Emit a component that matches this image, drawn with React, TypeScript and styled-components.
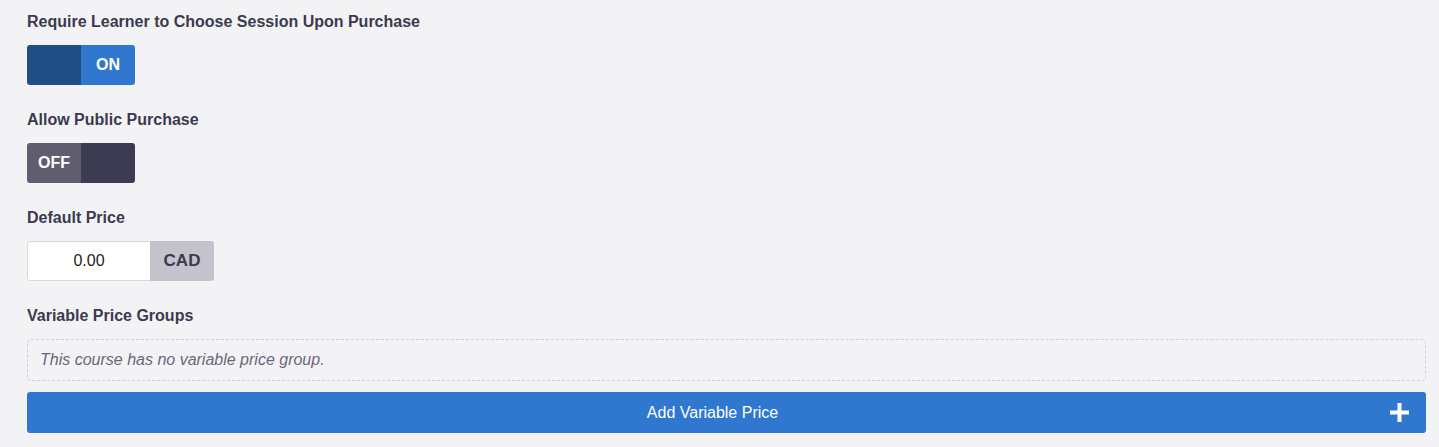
import React, { useState } from "react";
import styled, { createGlobalStyle } from "styled-components";

const GlobalStyle = createGlobalStyle`
  html, body {
    margin: 0;
    padding: 0;
    background: #f3f3f6;
  }
  body {
    font-family: "Liberation Sans", Arial, sans-serif;
  }
`;

const Page = styled.div`
  padding: 11px 13px 14px 27px;
  display: flex;
  flex-direction: column;
`;

const Field = styled.div`
  display: flex;
  flex-direction: column;
  align-items: flex-start;
  margin-bottom: 24px;
`;

const Label = styled.label`
  font-size: 16px;
  font-weight: 700;
  line-height: 20px;
  color: #3b3a4f;
  padding-top: 1px;
  margin-bottom: 13px;
`;

const Toggle = styled.button`
  display: flex;
  width: 108px;
  height: 40px;
  padding: 0;
  border: none;
  border-radius: 3px;
  overflow: hidden;
  cursor: pointer;
  font-family: inherit;
`;

interface IHalf {
  tone: string;
}
const Half = styled.span<IHalf>`
  flex: 1;
  display: flex;
  align-items: center;
  justify-content: center;
  background: ${(p) => p.tone};
  color: #fff;
  font-size: 16px;
  font-weight: 700;
`;

const PriceGroup = styled.div`
  display: flex;
  height: 40px;
  border-radius: 3px;
  overflow: hidden;
`;

const PriceInput = styled.input`
  width: 123px;
  box-sizing: border-box;
  border: 1px solid #d8d8de;
  border-right: none;
  border-radius: 3px 0 0 3px;
  background: #fff;
  text-align: center;
  font-family: inherit;
  font-size: 16px;
  color: #222;
  outline: none;
`;

const Currency = styled.span`
  width: 64px;
  display: flex;
  align-items: center;
  justify-content: center;
  background: #c4c3cc;
  color: #3b3a4f;
  font-size: 17px;
  font-weight: 700;
`;

const Empty = styled.div`
  height: 42px;
  box-sizing: border-box;
  border: 1px dashed #cfcfd4;
  border-radius: 4px;
  display: flex;
  align-items: center;
  padding: 0 12px;
  font-size: 16px;
  font-style: italic;
  color: #6a6879;
  margin-bottom: 11px;
`;

const AddButton = styled.button`
  position: relative;
  height: 41px;
  padding: 0 28px 0 0;
  border: none;
  border-radius: 3px;
  background: #3077d0;
  color: #fff;
  font-family: inherit;
  font-size: 16px;
  cursor: pointer;
  display: flex;
  align-items: center;
  justify-content: center;
`;

const PlusIcon = styled.svg`
  position: absolute;
  right: 17px;
  top: 11px;
`;

const App = () => {
  const [requireSession, setRequireSession] = useState<boolean>(true);
  const [publicPurchase, setPublicPurchase] = useState<boolean>(false);
  const [price, setPrice] = useState<string>("0.00");

  return (
    <Page>
      <GlobalStyle />
      <Field>
        <Label>Require Learner to Choose Session Upon Purchase</Label>
        <Toggle onClick={() => setRequireSession(!requireSession)}>
          {requireSession ? (
            <>
              <Half tone="#214d87" />
              <Half tone="#3077d0">ON</Half>
            </>
          ) : (
            <>
              <Half tone="#605d70">OFF</Half>
              <Half tone="#3c3b52" />
            </>
          )}
        </Toggle>
      </Field>
      <Field>
        <Label>Allow Public Purchase</Label>
        <Toggle onClick={() => setPublicPurchase(!publicPurchase)}>
          {publicPurchase ? (
            <>
              <Half tone="#214d87" />
              <Half tone="#3077d0">ON</Half>
            </>
          ) : (
            <>
              <Half tone="#605d70">OFF</Half>
              <Half tone="#3c3b52" />
            </>
          )}
        </Toggle>
      </Field>
      <Field>
        <Label>Default Price</Label>
        <PriceGroup>
          <PriceInput value={price} onChange={(e) => setPrice(e.target.value)} />
          <Currency>CAD</Currency>
        </PriceGroup>
      </Field>
      <Label>Variable Price Groups</Label>
      <Empty>This course has no variable price group.</Empty>
      <AddButton>
        Add Variable Price
        <PlusIcon width="19" height="19" viewBox="0 0 19 19">
          <path d="M7.5 0h4v7.5H19v4h-7.5V19h-4v-7.5H0v-4h7.5z" fill="#fff" />
        </PlusIcon>
      </AddButton>
    </Page>
  );
};

export default App;
